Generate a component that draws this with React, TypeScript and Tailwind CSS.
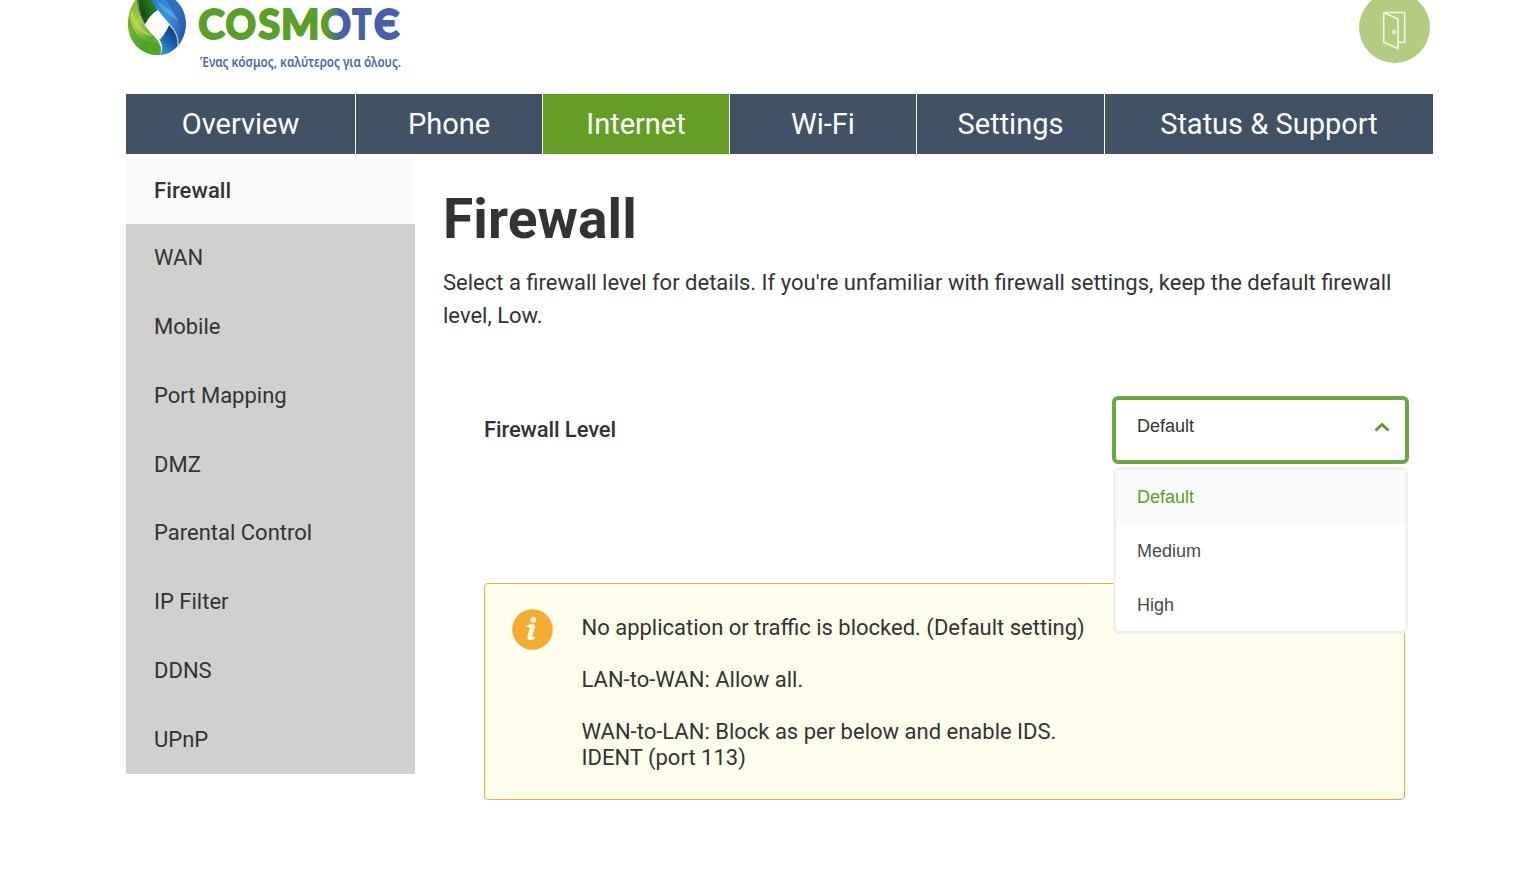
import { useState } from "react";
import clsx from "clsx";

const tabs = [
  { label: "Overview", width: "w-[229px]" },
  { label: "Phone", width: "w-[186px]" },
  { label: "Internet", width: "w-[186px]" },
  { label: "Wi-Fi", width: "w-[186px]" },
  { label: "Settings", width: "w-[187px]" },
  { label: "Status & Support", width: "w-[328px]" },
];

const menuItems = [
  "WAN",
  "Mobile",
  "Port Mapping",
  "DMZ",
  "Parental Control",
  "IP Filter",
  "DDNS",
  "UPnP",
];

const levels = ["Default", "Medium", "High"];

const wordmark = [
  { char: "C", x: 72.3, length: 26.5, color: "#5a9f28" },
  { char: "O", x: 99.4, length: 30.5, color: "#5a9f28" },
  { char: "S", x: 132.2, length: 22, color: "#5a9f28" },
  { char: "M", x: 155, length: 38.5, color: "#5a9f28" },
  { char: "O", x: 194.4, length: 30.5, color: "url(#letterO)" },
  { char: "T", x: 226.3, length: 19, color: "#4561a9" },
  { char: "Є", x: 248, length: 25.5, color: "#4561a9" },
];

function Logo() {
  return (
    <svg width="284" height="84" viewBox="0 0 284 84" role="img" aria-label="Cosmote">
      <defs>
        <linearGradient id="leaf" x1="0" y1="0" x2="0.8" y2="1">
          <stop offset="0" stopColor="#6fae2e" />
          <stop offset="0.4" stopColor="#a8cc45" />
          <stop offset="0.75" stopColor="#5aa92c" />
          <stop offset="1" stopColor="#6db52f" />
        </linearGradient>
        <linearGradient id="leafDark" x1="1" y1="0" x2="0" y2="0.6">
          <stop offset="0" stopColor="#3f9425" />
          <stop offset="1" stopColor="#07420f" />
        </linearGradient>
        <linearGradient id="wave" x1="0" y1="0" x2="1" y2="1">
          <stop offset="0" stopColor="#1c7fcb" />
          <stop offset="0.45" stopColor="#3d92d9" />
          <stop offset="1" stopColor="#2152a2" />
        </linearGradient>
        <linearGradient id="waveDark" x1="0.8" y1="0" x2="0.2" y2="1">
          <stop offset="0" stopColor="#0a2f63" />
          <stop offset="0.5" stopColor="#1a5fa5" />
          <stop offset="1" stopColor="#2d9be6" />
        </linearGradient>
        <linearGradient id="letterO" x1="0" y1="0" x2="1" y2="0">
          <stop offset="0.2" stopColor="#5a9f28" />
          <stop offset="0.65" stopColor="#4561a9" />
        </linearGradient>
      </defs>
      {/* emblem */}
      <path d="M11 -4 H27 L32 10 C27 13 23 18 19 25 C13 16 10 6 11 -4Z" fill="url(#leafDark)" />
      <path d="M11 -2 C5 5 2 14 2 24 C2 42 16 56 34 55 C37 48 33 41 28 36 C22 31 16 22 13 12 C11.500 7 11 2 11 -2Z" fill="url(#leaf)" />
      <path d="M3 17 C7 33 16 43 31 43 L35 47 L34 55 C15 56 2 42 2 24Z" fill="#3f9a28" opacity="0.55" />
      <path d="M6 9 C8 20 16 30 27 36 C18 36 8 30 4 15Z" fill="#c9dc62" opacity="0.6" />
      <path d="M24 -5 H42 C53 0 60 11 60 24 C60 32 57 40 52 46 C51 35 44 25 36 16 C30 9 26 2 24 -5Z" fill="url(#wave)" />
      <path d="M38 -4 C42 6 49 12 53 24 C56 32 55 39 52 45 C60 36 62 20 56 9 C51 0 45 -3 38 -4Z" fill="#2459a8" opacity="0.55" />
      <path d="M29 -2 C35 6 47 9 53 21 C46 17 35 12 29 -2Z" fill="#69b5ec" opacity="0.5" />
      <path d="M43 24 C50 31 53 38 52 46 C47 51 41 55 34 55 C38 49 36 43 33 39 C38 34 41 30 43 24Z" fill="url(#waveDark)" />
      <path d="M12 -2 C12 10 16 20 21 28" fill="none" stroke="#d9e6c8" strokeWidth="0.7" opacity="0.7" />
      <path d="M43 24 C50 31 53 38 52 46" fill="none" stroke="#cfd6dc" strokeWidth="1.1" />
      <path d="M32 10 C36 15 40 20 43.500 24 C41 30 38 35 34 39.500 C28 35 23 31 19 24.500 C22 18 27 13 32 10Z" fill="#fff" />
      {/* wordmark */}
      <g fontFamily="Lato, sans-serif" fontWeight="900" fontSize="41" strokeWidth="1.8" strokeLinejoin="round">
        {wordmark.map((letter) => (
          <text
            key={letter.x}
            x={letter.x}
            y="39.3"
            textLength={letter.length}
            lengthAdjust="spacingAndGlyphs"
            fill={letter.color}
            stroke={letter.color}
          >
            {letter.char}
          </text>
        ))}
      </g>
      <text
        x="74"
        y="66.500"
        textLength="201"
        lengthAdjust="spacingAndGlyphs"
        fontFamily="'Noto Sans', sans-serif"
        fontWeight="600"
        fontSize="13.500"
        fill="#4c67ac"
      >
        Ένας κόσμος, καλύτερος για όλους.
      </text>
    </svg>
  );
}

function LogoutButton() {
  return (
    <button aria-label="Log out" className="size-[71px] shrink-0 cursor-pointer rounded-full bg-[#b3cc7f]">
      <svg width="71" height="71" viewBox="0 0 71 71" fill="none" stroke="#f4f8ea" strokeWidth="1.6">
        <path d="M24.7 20.500H45.7V50.300H39.500M24.7 20.500V50.300L39 56.500V27L24.7 20.500" />
        <circle cx="34.8" cy="40" r="1.6" strokeWidth="1.4" />
      </svg>
    </button>
  );
}

function InfoIcon() {
  return (
    <svg width="41" height="41" viewBox="0 0 41 41" className="shrink-0">
      <circle cx="20.5" cy="20.5" r="20.3" fill="#f4ad30" />
      <circle cx="21.4" cy="10.8" r="2.8" fill="#fffdee" />
      <path
        d="M13.3 18.2 C15 16.2 17.2 15.2 19.6 15.2 C22.6 15.2 23.3 16.8 22.6 19.2 L20.4 26.6 C20 28.2 20.6 28.8 23.4 27.6 C23.2 29.8 21 31.2 18.6 31.2 C15.8 31.2 14.8 29.4 15.5 27 L17.6 20 C18 18.4 17.4 17.6 13.3 18.2Z"
        fill="#fffdee"
      />
    </svg>
  );
}

function LevelSelect() {
  const [open, setOpen] = useState(true);
  const [level, setLevel] = useState("Default");

  return (
    <div className="relative h-[68px] w-[297px] font-['Liberation_Sans',Arial,sans-serif] text-[18px]">
      <button
        onClick={() => setOpen(!open)}
        className="flex h-full w-full items-center justify-between rounded-[6px] border-4 border-[#6ca840] bg-white pr-[14px] pb-[8px] pl-[21px] text-[#333]"
      >
        {level}
        <svg width="18" height="12" viewBox="0 0 18 12" className={clsx("mt-[2px]", !open && "rotate-180")}>
          <path d="M2.500 9.500L9 3.500L15.500 9.500" fill="none" stroke="#5a9f28" strokeWidth="3" />
        </svg>
      </button>
      {open && (
        <ul className="absolute top-[71px] left-px z-10 w-[295px] rounded-[7px] border-3 border-[#f0f0f0] bg-white">
          {levels.map((item) => (
            <li
              key={item}
              onClick={() => {
                setLevel(item);
                setOpen(false);
              }}
              className={clsx(
                "flex h-[54px] cursor-pointer items-center pl-[21px] last:h-[53px] last:pt-[1px]",
                item === level ? "bg-[#fafafa] text-[#5a9f28]" : "text-[#4a4a4a]"
              )}
            >
              {item}
            </li>
          ))}
        </ul>
      )}
    </div>
  );
}

export default function App() {
  return (
    <div className="h-[871px] overflow-hidden bg-white font-[Roboto,sans-serif] text-[22px] text-[#333]">
      <div className="ml-[126px] w-[1307px]">
        <header className="flex h-[94px] items-start justify-between pr-[3px]">
          <Logo />
          <div className="-mt-[8px]">
            <LogoutButton />
          </div>
        </header>

        <nav className="flex h-[60px] gap-px">
          {tabs.map((tab) => (
            <a
              key={tab.label}
              href="#"
              className={clsx(
                "flex items-center justify-center pt-[2px] text-[29px] text-white",
                tab.width,
                tab.label === "Internet" ? "bg-[#649e27]" : "bg-[#415266]"
              )}
            >
              {tab.label}
            </a>
          ))}
        </nav>

        <div className="flex pt-[2px]">
          <aside className="w-[289px] shrink-0">
            <a href="#" className="flex h-[68px] items-center bg-[#fafafa] pl-[28px] font-medium tracking-[0.1px]">
              Firewall
            </a>
            <div className="bg-[#d0d0ce]">
              {menuItems.map((item) => (
                <a key={item} href="#" className="flex h-[68.75px] items-center pb-[1px] pl-[28px]">
                  {item}
                </a>
              ))}
            </div>
          </aside>

          <main className="w-[1018px] pl-[28px]">
            <h1 className="mt-[30px] text-[55px] leading-[66px] font-bold tracking-[0.1px]">Firewall</h1>
            <p className="mt-[14px] w-[980px] leading-[33px]">
              Select a firewall level for details. If you're unfamiliar with firewall settings, keep the default firewall
              level, Low.
            </p>

            <div className="mt-[64px] flex items-center justify-between pr-[24px] pl-[41px]">
              <span className="pb-[2px] font-medium tracking-[-0.12px]">Firewall Level</span>
              <LevelSelect />
            </div>

            <div className="mt-[119px] ml-[41px] flex h-[217px] w-[921px] gap-[28.5px] rounded-[4px] border border-[#f0ae35] bg-[#fffdec] pt-[25px] pl-[27px]">
              <InfoIcon />
              <div className="pt-[6px] leading-[26px]">
                <p>No application or traffic is blocked. (Default setting)</p>
                <p className="mt-[26px]">LAN-to-WAN: Allow all.</p>
                <p className="mt-[26px]">
                  WAN-to-LAN: Block as per below and enable IDS.
                  <br />
                  IDENT (port 113)
                </p>
              </div>
            </div>
          </main>
        </div>
      </div>
    </div>
  );
}
